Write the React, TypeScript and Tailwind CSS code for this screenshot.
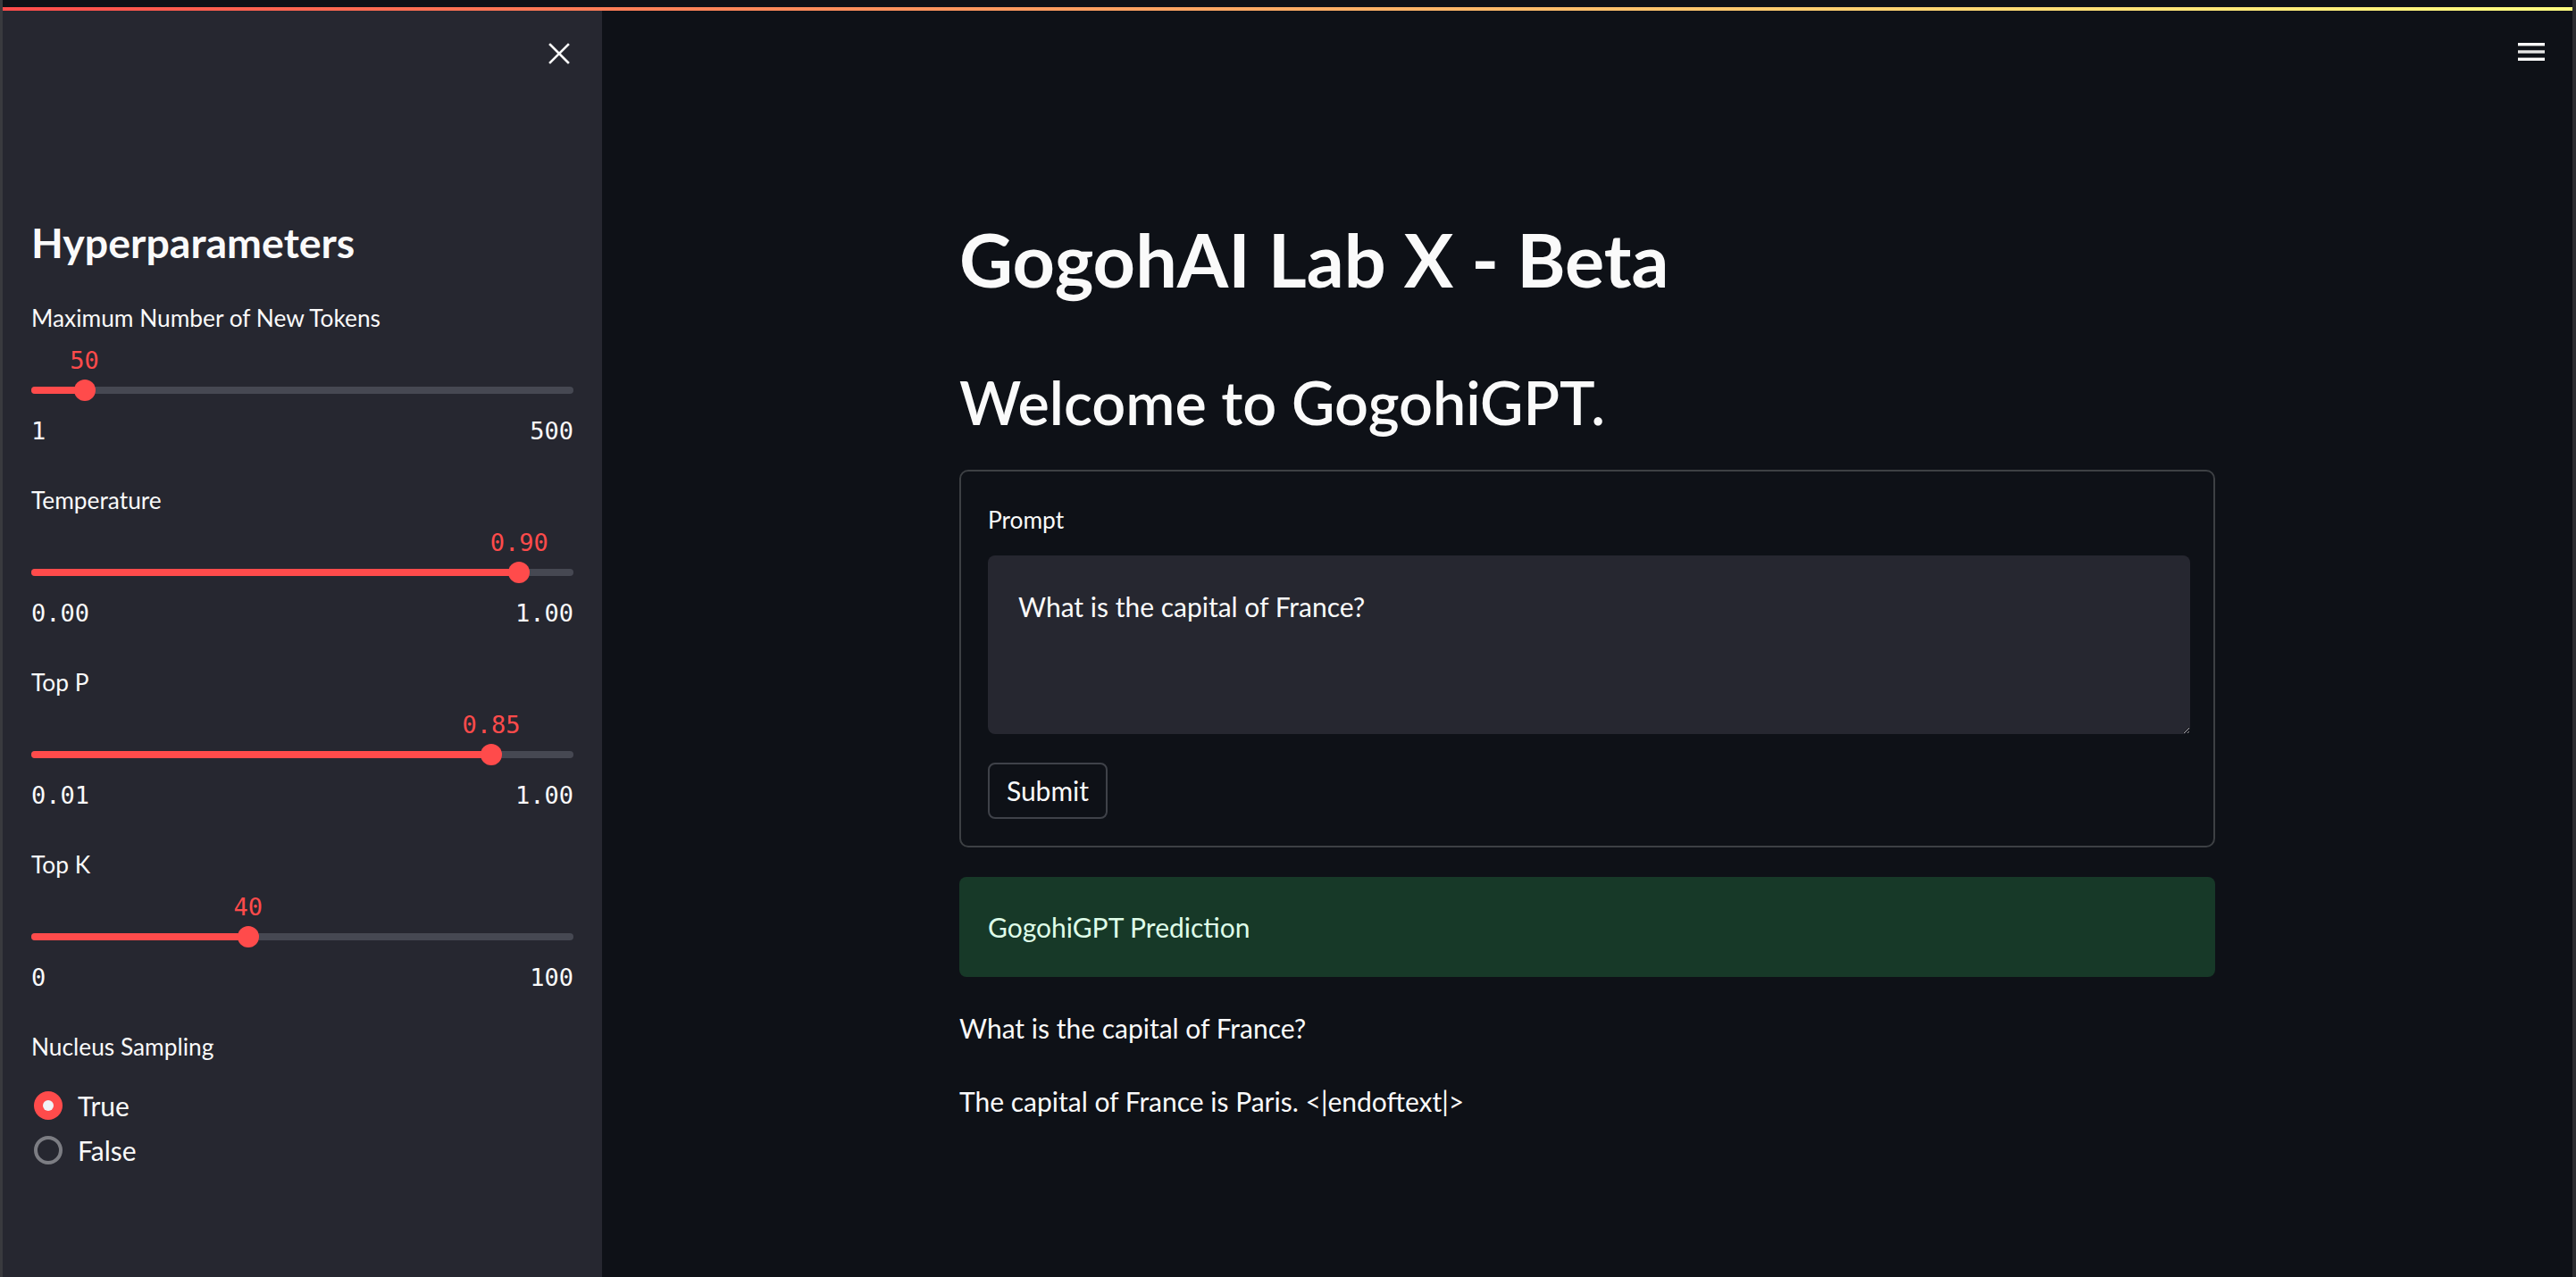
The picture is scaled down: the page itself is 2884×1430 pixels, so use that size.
import React from "react";

type SliderProps = {
  label: string;
  value: number;
  min: number;
  max: number;
  digits: number;
};

function Slider({ label, value, min, max, digits }: SliderProps) {
  const frac = (value - min) / (max - min);
  const pct = `${frac * 100}%`;
  const fmt = (n: number) => n.toFixed(digits);
  return (
    <div className="flex flex-col">
      <div className="h-[32px] text-[26.3px] leading-[32px] text-[#fafafa]">{label}</div>
      <div className="relative mt-[16px] h-[32px]">
        <span
          className="absolute top-0 -translate-x-1/2 font-['DejaVu_Sans_Mono',monospace] text-[27px] leading-[32px] text-[#ff4b4b] whitespace-nowrap"
          style={{ left: pct }}
        >
          {fmt(value)}
        </span>
      </div>
      <div className="relative mt-[5px] flex h-[24px] items-center">
        <div className="h-[8px] w-full overflow-hidden rounded-full bg-[#464852]">
          <div className="h-full bg-[#ff4b4b]" style={{ width: pct }} />
        </div>
        <div
          className="absolute top-0 h-[24px] w-[24px] -translate-x-1/2 rounded-full bg-[#ff4b4b]"
          style={{ left: pct }}
        />
      </div>
      <div className="mt-[18px] flex h-[32px] justify-between font-['DejaVu_Sans_Mono',monospace] text-[27px] leading-[32px] text-[#fafafa]">
        <span>{fmt(min)}</span>
        <span>{fmt(max)}</span>
      </div>
    </div>
  );
}

function Radio({ label, checked }: { label: string; checked: boolean }) {
  return (
    <div className="flex h-[40px] items-center">
      {checked ? (
        <div className="ml-[3px] flex h-[32px] w-[32px] items-center justify-center rounded-full bg-[#ff4b4b]">
          <div className="h-[12px] w-[12px] rounded-full bg-[#f0f2f6]" />
        </div>
      ) : (
        <div className="ml-[3px] h-[32px] w-[32px] rounded-full border-[4px] border-[#7c7d83]" />
      )}
      <span className="ml-[17px] text-[30px] leading-[40px] text-[#fafafa]">{label}</span>
    </div>
  );
}

export default function App() {
  return (
    <div className="flex h-[1430px] w-[2884px] flex-col overflow-hidden border-l-[3px] border-r-[4px] border-l-[#393a3e] border-r-[#2c2d31] bg-[#0e1117] font-['Lato',sans-serif] text-[#fafafa]">
      <div className="h-[8px] shrink-0 bg-[#0e1117]" />
      <div className="h-[4px] shrink-0 bg-gradient-to-r from-[#ff4b4b] to-[#fffd80]" />
      <div className="flex min-h-0 flex-1">
        {/* Sidebar */}
        <aside className="flex w-[671px] shrink-0 flex-col bg-[#262730] px-[32px]">
          <div className="flex justify-end pt-[36px] pr-[4px]">
            <svg width="24" height="24" viewBox="0 0 24 24" fill="none">
              <path d="M2 2 L22 22 M22 2 L2 22" stroke="#fafafa" strokeWidth="2.6" strokeLinecap="square" />
            </svg>
          </div>
          <h2 className="mt-[171px] h-[56px] text-[46.5px] font-bold leading-[56px]">Hyperparameters</h2>
          <div className="mt-[41px] flex flex-col gap-[45px]">
            <Slider label="Maximum Number of New Tokens" value={50} min={1} max={500} digits={0} />
            <Slider label="Temperature" value={0.9} min={0} max={1} digits={2} />
            <Slider label="Top P" value={0.85} min={0.01} max={1} digits={2} />
            <Slider label="Top K" value={40} min={0} max={100} digits={0} />
            <div className="flex flex-col">
              <div className="h-[32px] text-[26.3px] leading-[32px]">Nucleus Sampling</div>
              <div className="mt-[30px] flex flex-col gap-[10px]">
                <Radio label="True" checked />
                <Radio label="False" checked={false} />
              </div>
            </div>
          </div>
        </aside>

        {/* Main */}
        <main className="flex min-w-0 flex-1 flex-col">
          <div className="flex justify-end pt-[36px] pr-[31px]">
            <svg width="30" height="20" viewBox="0 0 30 20">
              <rect x="0" y="0" width="30" height="3.4" fill="#fafafa" />
              <rect x="0" y="8.3" width="30" height="3.4" fill="#e6e6e6" />
              <rect x="0" y="16.6" width="30" height="3.4" fill="#fafafa" />
            </svg>
          </div>
          <div className="mx-auto flex w-[1406px] flex-col">
            <h1 className="mt-[172px] h-[100px] text-[82.7px] font-bold leading-[100px]">GogohAI Lab X - Beta</h1>
            <h2 className="mt-[70px] h-[80px] text-[66.5px] font-semibold leading-[80px]">Welcome to GogohiGPT.</h2>
            <div className="mt-[36px] flex flex-col rounded-[10px] border-[2px] border-[#3d4044] pl-[30px] pr-[26px] pt-[38px] pb-[30px]">
              <div className="h-[32px] text-[26.3px] leading-[32px]">Prompt</div>
              <textarea
                className="mt-[24px] h-[200px] w-full resize-y rounded-[8px] bg-[#262730] pl-[34px] pr-[20px] pt-[37px] text-[30px] leading-[40px] text-[#fafafa] outline-none"
                defaultValue="What is the capital of France?"
              />
              <div className="mt-[32px] flex">
                <button className="flex h-[63px] w-[134px] items-center justify-center rounded-[8px] border-[2px] border-[#3f4249] bg-[#0e1117] text-[30px] text-[#fafafa]">
                  Submit
                </button>
              </div>
            </div>
            <div className="mt-[33px] flex h-[112px] items-center rounded-[8px] bg-[#173928] px-[32px] text-[30px] leading-[40px] text-[#dffde9]">
              GogohiGPT Prediction
            </div>
            <p className="mt-[37px] h-[40px] text-[30px] leading-[40px]">What is the capital of France?</p>
            <p className="mt-[42px] h-[40px] text-[30px] leading-[40px]">The capital of France is Paris. &lt;|endoftext|&gt;</p>
          </div>
        </main>
      </div>
    </div>
  );
}
